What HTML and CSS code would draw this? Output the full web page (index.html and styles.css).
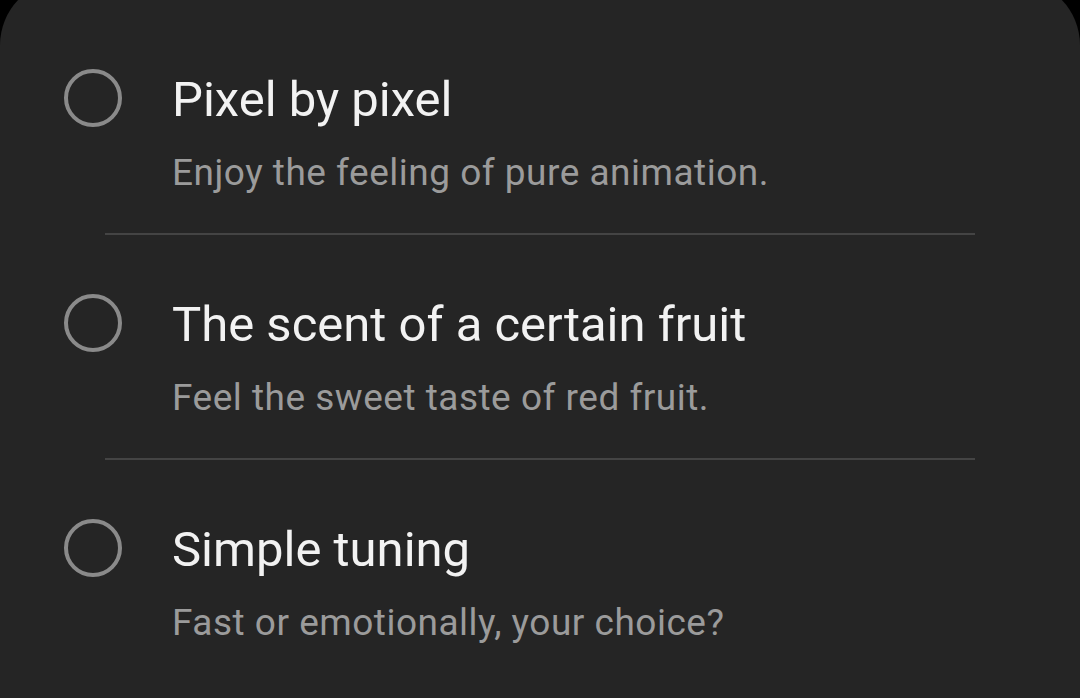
FILE: index.html
```html
<!DOCTYPE html>
<html>
<head>
<meta charset="utf-8">
<link rel="stylesheet" href="styles.css">
</head>
<body>
<div class="card">
  <div class="option">
    <div class="radio-col"><span class="radio"></span></div>
    <div class="text">
      <div class="title">Pixel by pixel</div>
      <div class="sub">Enjoy the feeling of pure animation.</div>
    </div>
  </div>
  <div class="sep"></div>
  <div class="option">
    <div class="radio-col"><span class="radio"></span></div>
    <div class="text">
      <div class="title">The scent of a certain fruit</div>
      <div class="sub">Feel the sweet taste of red fruit.</div>
    </div>
  </div>
  <div class="sep"></div>
  <div class="option">
    <div class="radio-col"><span class="radio"></span></div>
    <div class="text">
      <div class="title">Simple tuning</div>
      <div class="sub">Fast or emotionally, your choice?</div>
    </div>
  </div>
</div>
</body>
</html>
```

FILE: styles.css
```css
html, body {
  margin: 0;
  padding: 0;
  background: #000;
  height: 100%;
  overflow: hidden;
}
.card {
  margin-top: -20px;
  background: #252525;
  border-radius: 65px 65px 0 0;
  height: 718px;
  padding-top: 88px;
  box-sizing: border-box;
  font-family: Roboto, "Noto Sans", sans-serif;
}
.option {
  display: flex;
  align-items: flex-start;
  padding-left: 64px;
}
.radio-col {
  width: 58px;
  height: 60px;
  display: flex;
  align-items: center;
  margin-right: 50px;
}
.radio {
  width: 58px;
  height: 58px;
  box-sizing: border-box;
  border: 4px solid #8a8a8a;
  border-radius: 50%;
}
.text {
  padding-top: 2px;
}
.title {
  color: #f2f2f2;
  font-size: 49px;
  line-height: 60px;
}
.sub {
  color: #9b9b9b;
  font-size: 37px;
  line-height: 44px;
  letter-spacing: 0.5px;
  margin-top: 21px;
}
.sep {
  height: 2px;
  background: #444;
  margin: 38px 105px 58px 105px;
}
```
